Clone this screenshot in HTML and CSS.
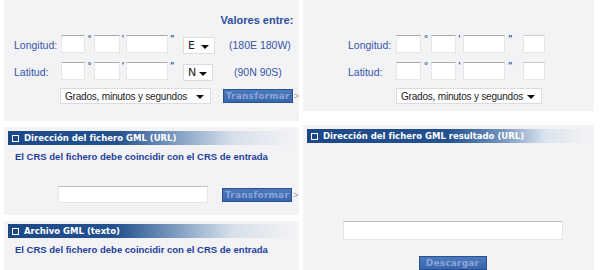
FILE: index.html
```html
<!DOCTYPE html>
<html lang="es">
<head>
    <meta charset="UTF-8">
    <title>Transformación de coordenadas</title>
    <link rel="stylesheet" href="styles.css">
</head>
<body>
    <div class="page">
        <div class="col col-left">
            <div class="panel coords coords-left">
                <div class="range-title">Valores entre:</div>
                <div class="coord-row">
                    <span class="label">Longitud:</span>
                    <span class="field f-deg"></span><span class="mark m-deg">°</span>
                    <span class="field f-min"></span><span class="mark m-min">'</span>
                    <span class="field f-sec"></span><span class="mark m-sec">''</span>
                    <div class="select sel-dir"><span>E</span><i class="caret"></i></div>
                    <span class="range">(180E 180W)</span>
                </div>
                <div class="coord-row">
                    <span class="label">Latitud:</span>
                    <span class="field f-deg"></span><span class="mark m-deg">°</span>
                    <span class="field f-min"></span><span class="mark m-min">'</span>
                    <span class="field f-sec"></span><span class="mark m-sec">''</span>
                    <div class="select sel-dir sel-n"><span>N</span><i class="caret"></i></div>
                    <span class="range range-lat">(90N 90S)</span>
                </div>
                <div class="format-row">
                    <div class="select sel-format"><span>Grados, minutos y segundos</span><i class="caret"></i></div>
                    <div class="btn-wrap"><span class="btn btn-transform">Transformar</span><span class="btn-arrow">&gt;</span></div>
                </div>
            </div>

            <div class="panel file-panel url-panel">
                <div class="bar bar-short"><i class="box"></i>Dirección del fichero GML (URL)</div>
                <p class="note">El CRS del fichero debe coincidir con el CRS de entrada</p>
                <div class="url-row">
                    <span class="field f-url"></span>
                    <div class="btn-wrap"><span class="btn btn-transform">Transformar</span><span class="btn-arrow">&gt;</span></div>
                </div>
            </div>

            <div class="panel file-panel text-panel">
                <div class="bar bar-short"><i class="box"></i>Archivo GML (texto)</div>
                <p class="note">El CRS del fichero debe coincidir con el CRS de entrada</p>
            </div>
        </div>

        <div class="col col-right">
            <div class="panel coords coords-right">
                <div class="coord-row">
                    <span class="label">Longitud:</span>
                    <span class="field f-deg"></span><span class="mark m-deg">°</span>
                    <span class="field f-min"></span><span class="mark m-min">'</span>
                    <span class="field f-sec"></span><span class="mark m-sec">''</span>
                    <span class="field f-extra"></span>
                </div>
                <div class="coord-row">
                    <span class="label">Latitud:</span>
                    <span class="field f-deg"></span><span class="mark m-deg">°</span>
                    <span class="field f-min"></span><span class="mark m-min">'</span>
                    <span class="field f-sec"></span><span class="mark m-sec">''</span>
                    <span class="field f-extra"></span>
                </div>
                <div class="format-row">
                    <div class="select sel-format sel-format-right"><span>Grados, minutos y segundos</span><i class="caret"></i></div>
                </div>
            </div>

            <div class="panel file-panel result-panel">
                <div class="bar bar-long"><i class="box"></i>Dirección del fichero GML resultado (URL)</div>
                <div class="result-body">
                    <span class="field f-result"></span>
                    <span class="btn btn-download">Descargar</span>
                </div>
            </div>
        </div>
    </div>
</body>
</html>
```

FILE: styles.css
```css
body {
    margin: 0;
    background-color: #fff;
    font-family: "Liberation Sans", Arial, sans-serif;
    color: #3355a8;
    overflow: hidden;
}

.page {
    display: flex;
    gap: 4px;
    padding-left: 4px;
    height: 270px;
}

.col {
    display: flex;
    flex-direction: column;
}

.col-left {
    width: 295px;
    gap: 6px;
}

.col-right {
    width: 291px;
    gap: 14px;
}

.panel {
    background-color: #f3f3f5;
}

/* coordinate panels */

.coords {
    box-sizing: border-box;
    height: 121px;
    padding-top: 13px;
}

.coords-left {
    padding-left: 10px;
}

.coords-right {
    height: 113px;
    padding-top: 27px;
    padding-left: 45px;
}

.range-title {
    margin-left: 204px;
    width: 78px;
    text-align: center;
    font-size: 11px;
    font-weight: bold;
    line-height: 14px;
    color: #2b4fa0;
}

.coord-row {
    display: flex;
    align-items: flex-start;
    height: 18px;
    margin-top: 8px;
}

.coord-row + .coord-row {
    margin-top: 9px;
}

.label {
    width: 47px;
    font-size: 10.5px;
    line-height: 18px;
    padding-top: 1px;
}

.coords-right .label {
    width: 48px;
}

.field {
    box-sizing: border-box;
    display: block;
    height: 18px;
    background-color: #fff;
    border: 1px solid #e6e6e8;
    border-top-color: #a9a9ad;
}

.f-deg { width: 24px; }
.f-min { width: 26px; }
.f-sec { width: 42px; }

.coords-right .f-deg,
.coords-right .f-min { width: 25px; }

.f-extra {
    width: 22px;
    border-top-color: #c9c9cc;
}

.mark {
    font-family: "DejaVu Sans", Verdana, sans-serif;
    font-size: 9px;
    font-weight: bold;
    line-height: 8px;
    color: #2b4fa0;
    text-align: center;
}

.m-deg { width: 9px; }
.m-min { width: 6px; }
.m-sec { width: 15px; text-align: left; padding-left: 2px; box-sizing: border-box; letter-spacing: -1px; }

.coords-right .m-deg { width: 10px; }
.coords-right .m-min { width: 7px; }
.coords-right .m-sec { width: 18px; padding-left: 3px; }

.select {
    box-sizing: border-box;
    display: flex;
    align-items: center;
    justify-content: space-between;
    background-color: #fff;
    border: 1px solid #dcdcdf;
    font-family: "DejaVu Sans", Verdana, sans-serif;
    font-size: 11px;
    color: #222;
    white-space: nowrap;
}

.caret {
    flex: none;
    width: 0;
    height: 0;
    border-left: 4px solid transparent;
    border-right: 4px solid transparent;
    border-top: 4px solid #111;
    margin-top: 2px;
}

.sel-dir {
    width: 32px;
    height: 17px;
    margin-top: 2px;
    padding: 0 5px 0 4px;
}

.sel-n {
    width: 30px;
}

.range {
    margin-left: 14px;
    font-size: 10.5px;
    line-height: 18px;
    padding-top: 1px;
}

.range-lat {
    margin-left: 21px;
}

.format-row {
    display: flex;
    align-items: center;
    margin-top: 8px;
    margin-left: 46px;
}

.coords-right .format-row {
    margin-left: 48px;
}

.sel-format {
    width: 151px;
    height: 16px;
    padding: 0 6px 0 4px;
    font-family: "Liberation Sans", Arial, sans-serif;
    font-size: 10px;
    letter-spacing: -0.2px;
}

.sel-format-right {
    width: 146px;
}

.btn-wrap {
    display: flex;
    align-items: center;
    margin-left: 12px;
}

.btn {
    display: block;
    box-sizing: border-box;
    background: linear-gradient(#4c78bd, #3a66ae);
    border: 1px solid #2a5192;
    color: #8ba6d7;
    font-family: "DejaVu Sans", Verdana, sans-serif;
    font-size: 9px;
    font-weight: bold;
    text-align: center;
}

.btn-transform {
    width: 70px;
    height: 14px;
    line-height: 12px;
    letter-spacing: 0.2px;
}

.btn-arrow {
    font-size: 9px;
    color: #9a9aa0;
    margin-left: 1px;
}

/* file panels */

.url-panel {
    height: 88px;
}

.text-panel {
    flex: 1;
}

.bar {
    display: flex;
    align-items: center;
    height: 14px;
    margin: 4px 4px 0 4px;
    padding-left: 4px;
    font-family: "DejaVu Sans", Verdana, sans-serif;
    font-size: 8.5px;
    font-weight: bold;
    color: #fff;
    white-space: nowrap;
}

.text-panel .bar {
    margin-top: 3px;
}

.bar-short {
    background: linear-gradient(to right, #1c4888 0%, #24528f 38%, #8ea9c9 62%, #d6dfea 78%, #f3f3f5 100%);
}

.bar-long {
    background: linear-gradient(to right, #1c4888 0%, #24528f 50%, #6f91bb 68%, #dbe3ed 84%, #f3f3f5 100%);
}

.box {
    box-sizing: border-box;
    width: 7px;
    height: 7px;
    border: 1px solid #fff;
    margin-right: 5px;
}

.note {
    margin: 6px 0 0 11px;
    font-size: 9.5px;
    font-weight: bold;
    line-height: 12px;
    color: #24409a;
}

.url-row {
    display: flex;
    align-items: center;
    margin-top: 23px;
    margin-left: 54px;
}

.f-url {
    width: 150px;
    height: 17px;
    border-top-color: #bdbdc1;
}

.url-row .btn-wrap {
    margin-left: 14px;
}

.result-panel {
    flex: 1;
}

.result-body {
    display: flex;
    flex-direction: column;
    align-items: center;
    padding-top: 78px;
}

.f-result {
    width: 220px;
    height: 19px;
    border-top-color: #bdbdc1;
    margin-left: 8px;
}

.btn-download {
    width: 68px;
    height: 14px;
    margin-top: 16px;
    margin-left: 8px;
    line-height: 12px;
    letter-spacing: 0.2px;
}
```
